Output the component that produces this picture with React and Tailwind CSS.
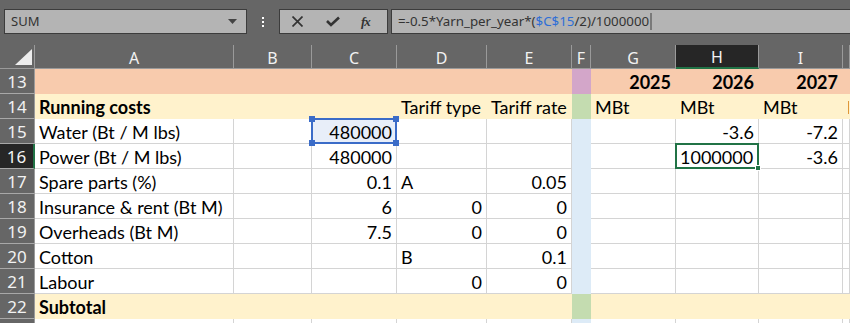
import React from "react";

const COLS = ["A", "B", "C", "D", "E", "F", "G", "H", "I", "J"];

const ROWS = [
  { n: 13, fill: "peach", cells: { G: "2025", H: "2026", I: "2027" }, bold: true },
  { n: 14, fill: "cream", cells: { A: "Running costs", D: "Tariff type", E: "Tariff rate", G: "MBt", H: "MBt", I: "MBt", J: "MBt" }, boldA: true },
  { n: 15, cells: { A: "Water (Bt / M lbs)", C: "480000", H: "-3.6", I: "-7.2" } },
  { n: 16, cells: { A: "Power (Bt / M lbs)", C: "480000", H: "1000000", I: "-3.6" } },
  { n: 17, cells: { A: "Spare parts (%)", C: "0.1", D: "A", E: "0.05" } },
  { n: 18, cells: { A: "Insurance & rent (Bt M)", C: "6", D: "0", E: "0" } },
  { n: 19, cells: { A: "Overheads (Bt M)", C: "7.5", D: "0", E: "0" } },
  { n: 20, cells: { A: "Cotton", D: "B", E: "0.1" } },
  { n: 21, cells: { A: "Labour", D: "0", E: "0" } },
  { n: 22, fill: "cream", cells: { A: "Subtotal" }, boldA: true },
  { n: 23, cells: {} },
];

const isNum = (v) => /^-?[0-9.]+$/.test(v);

function cellColor(row, col) {
  if (col === "F") {
    if (row.fill === "peach") return "bg-[#d3a6c9] border-[#d3a6c9]";
    if (row.fill === "cream") return "bg-[#c4dcb0] border-[#c4dcb0]";
    return "bg-[#ddebf7] border-[#ddebf7]";
  }
  if (row.fill === "peach") return "bg-[#f8cbad] border-[#f8cbad]";
  if (row.fill === "cream") return "bg-[#fff2cc] border-[#fff2cc]";
  return "bg-white border-[#d4d4d4]";
}

function Cell({ row, col }) {
  const v = row.cells[col];
  const refCell = row.n === 15 && col === "C";
  const active = row.n === 16 && col === "H";
  const right = v && isNum(v) && !active;
  const bold = row.bold || (row.boldA && col === "A");
  return (
    <div
      className={`relative border-r border-b flex items-end pb-[1px] leading-[20px] whitespace-nowrap ${cellColor(row, col)} ${
        refCell ? "!bg-[#e8eef9]" : ""
      } ${right ? "justify-end pr-[4px]" : "justify-start pl-[4px]"} ${bold ? "font-bold" : ""} ${col === "J" ? "overflow-hidden" : ""}`}
    >
      <span>{v}</span>
      {refCell && (
        <div className="absolute -inset-px border-2 border-[#3b6cc8] z-10">
          <span className="absolute -left-[4px] -top-[4px] w-[6px] h-[6px] bg-[#3b6cc8]" />
          <span className="absolute -right-[4px] -top-[4px] w-[6px] h-[6px] bg-[#3b6cc8]" />
          <span className="absolute -left-[4px] -bottom-[4px] w-[6px] h-[6px] bg-[#3b6cc8]" />
          <span className="absolute -right-[4px] -bottom-[4px] w-[6px] h-[6px] bg-[#3b6cc8]" />
        </div>
      )}
      {active && (
        <div className="absolute -inset-px border-2 border-[#217346] z-10">
          <span className="absolute -right-[4px] -bottom-[4px] w-[6px] h-[6px] bg-[#217346] border border-white" />
        </div>
      )}
    </div>
  );
}

function FormulaBar() {
  return (
    <div className="h-[45px] flex items-start pt-[9px] pl-[4px]" style={{ fontFamily: "'Noto Sans', sans-serif" }}>
      {/* name box */}
      <div className="w-[243px] h-[25px] bg-[#b4b4b4] border border-[#3c3c3c] flex items-center justify-between pl-[6px] pr-[9px] text-[13px] text-[#333]">
        <span>SUM</span>
        <svg width="9" height="5" viewBox="0 0 9 5"><path d="M0 0h9L4.5 5z" fill="#444" /></svg>
      </div>
      <div className="w-[32px] h-[25px] flex flex-col items-center justify-center gap-[2px]">
        <span className="w-[2px] h-[2px] bg-white" />
        <span className="w-[2px] h-[2px] bg-white" />
        <span className="w-[2px] h-[2px] bg-white" />
      </div>
      {/* buttons */}
      <div className="w-[109px] h-[25px] bg-[#b4b4b4] border border-[#3c3c3c] flex items-center pl-[12px] text-[#333]">
        <svg width="11" height="11" viewBox="0 0 11 11" className="mr-[23px]">
          <path d="M0.5 0.5L10.5 10.5M10.5 0.5L0.5 10.5" stroke="#333" strokeWidth="1.7" />
        </svg>
        <svg width="14" height="11" viewBox="0 0 14 11" className="mr-[21px]">
          <path d="M1 5L5 9L13 1.5" stroke="#333" strokeWidth="2.6" fill="none" />
        </svg>
        <span className="italic text-[13px] font-bold tracking-[-1px]" style={{ fontFamily: "'Liberation Serif', serif" }}>fx</span>
      </div>
      {/* formula */}
      <div className="ml-[3px] flex-1 h-[25px] bg-[#b4b4b4] border border-[#3c3c3c] border-r-0 flex items-center pl-[6px] text-[13.3px] text-[#333]">
        <span>=-0.5*Yarn_per_year*(</span>
        <span className="text-[#2f6fd6]">$C$15</span>
        <span>/2)/1000000</span>
        <span className="w-[2px] h-[17px] bg-[#7a7a7a] ml-[1px]" />
      </div>
    </div>
  );
}

export default function App() {
  return (
    <div className="w-[850px] h-[323px] overflow-hidden bg-[#666666]">
      <FormulaBar />
      <div
        className="grid grid-cols-[35px_199px_78px_85px_90px_85px_19px_85px_83px_84px_1fr] grid-rows-[24px] auto-rows-[25px] text-[18px] text-black"
        style={{ fontFamily: "Lato, sans-serif" }}
      >
        {/* corner */}
        <div className="relative bg-[#666666] border-r border-b border-[#9a9a9a]">
          <svg className="absolute left-[15px] top-[4px]" width="17" height="16" viewBox="0 0 17 16">
            <path d="M0 16L17 0V16z" fill="#ededed" />
          </svg>
        </div>
        {COLS.map((c) => (
          <div
            key={c}
            className={`flex items-center justify-center text-[16px] leading-none pt-[2px] text-[#f2f2f2] border-r ${
              c === "H" ? "bg-[#262626] border-b-2 border-b-[#217346] border-r-[#9a9a9a]" : "bg-[#666666] border-b border-[#9a9a9a]"
            }`}
            style={{ fontFamily: "'Noto Sans', sans-serif" }}
          >
            {c === "J" ? "" : c}
          </div>
        ))}
        {ROWS.map((row) => (
          <React.Fragment key={row.n}>
            <div
              className={`flex items-center justify-center text-[17px] leading-none pt-[1px] text-[#f2f2f2] border-b border-[#a8a8a8] ${
                row.n === 16 ? "bg-[#262626] border-r-2 border-r-[#217346]" : "bg-[#666666] border-r border-r-[#9a9a9a]"
              }`}
              style={{ fontFamily: "'Noto Sans', sans-serif" }}
            >
              {row.n}
            </div>
            {COLS.map((c) => (
              <Cell key={c} row={row} col={c} />
            ))}
          </React.Fragment>
        ))}
      </div>
    </div>
  );
}
